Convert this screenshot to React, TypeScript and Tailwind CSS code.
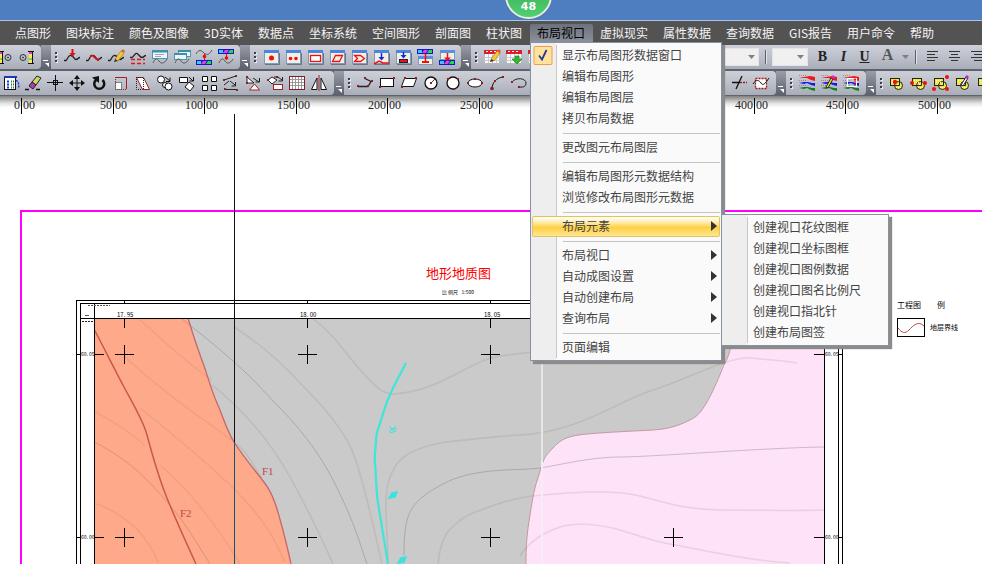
import type { ReactNode } from 'react';

const NAV_BEFORE = ['点图形', '图块标注', '颜色及图像', '3D实体', '数据点', '坐标系统', '空间图形', '剖面图', '柱状图'];
const NAV_AFTER = ['虚拟现实', '属性数据', '查询数据', 'GIS报告', '用户命令', '帮助'];

type Entry = { label: string; checked?: boolean; arrow?: boolean; active?: boolean } | 'sep';

const MENU: Entry[] = [
  { label: '显示布局图形数据窗口', checked: true },
  { label: '编辑布局图形' },
  { label: '编辑布局图层' },
  { label: '拷贝布局数据' },
  'sep',
  { label: '更改图元布局图层' },
  'sep',
  { label: '编辑布局图形元数据结构' },
  { label: '浏览修改布局图形元数据' },
  'sep',
  { label: '布局元素', arrow: true, active: true },
  'sep',
  { label: '布局视口', arrow: true },
  { label: '自动成图设置', arrow: true },
  { label: '自动创建布局', arrow: true },
  { label: '查询布局', arrow: true },
  'sep',
  { label: '页面编辑' },
];

const SUBMENU: Entry[] = [
  { label: '创建视口花纹图框' },
  { label: '创建视口坐标图框' },
  { label: '创建视口图例数据' },
  { label: '创建视口图名比例尺' },
  { label: '创建视口指北针' },
  { label: '创建布局图签' },
];

/* ---------- icon fragments, drawn on an 18 x 18 grid ---------- */

const Gauge = ({ x, c }: { x: number; c: number }) => (
  <>
    <rect x={x} y="4" width="3" height="2" fill="#e040d0" />
    <rect x={x} y="6" width="3" height="4" fill="#f4ec50" />
    <rect x={x} y="10" width="3" height="2" fill="#90c850" />
    <rect x={x} y="12" width="3" height="3" fill="#f4ec50" />
    <path d={`M${x - 1} 3.5h6M${x - 1} 15.500h6M${x + 3.5} 3v12`} stroke="#111" />
    <circle cx={c} cy="9.500" r="3" fill="none" stroke="#333" />
    <circle cx={c} cy="9.500" r="0.800" fill="#111" />
  </>
);

const Bars = ({ y }: { y: number }) => (
  <>
    <rect x="1" y={y} width="16" height="5" fill="#1418c8" />
    <rect x="2" y={y + 1} width="4" height="3" fill="#3cc8f0" />
    <path d={`M6 ${y + 4}l2-3h4l-2 3z`} fill="#e040e0" />
    <path d={`M11 ${y + 4}l2-3h3v3z`} fill="#20e040" />
  </>
);

const Win = ({ children }: { children?: ReactNode }) => (
  <>
    <rect x="2.500" y="2.500" width="14" height="13" fill="#f3f0e2" stroke="#7d9cc4" />
    <rect x="2" y="2" width="15" height="3" fill="#4a86e0" />
    <path d="M3 16.500h14.500V5" stroke="#6b7482" fill="none" />
    {children}
  </>
);

const Table = ({ children }: { children?: ReactNode }) => (
  <>
    <rect x="1.500" y="2.500" width="15" height="13" fill="#fafafa" stroke="#b8b8b8" />
    <path d="M1 9.500h16M1 12.500h16M5.500 6v9M9.500 6v9M13.500 6v9" stroke="#c6ccd0" />
    <rect x="1" y="2" width="16" height="4" fill="#d8202c" />
    <path d="M3 3.500h2M7 3.500h2M11 3.500h2" stroke="#fff" />
    {children}
  </>
);

const Stripes = ({ children }: { children?: ReactNode }) => (
  <>
    <path d="M1 4l5-1 6-1 5 1v4l-4-1-4-2-3 0z" fill="#f01818" />
    <path d="M1 9l5-1 4 0 4 1 3 0v3l-4-1-4-2-3 1z" fill="#1818f0" />
    <path d="M1 14l5-1 4 0 4 1 3 0v3l-4-1-4-2-3 1z" fill="#108020" />
    <path d="M1 1.500h8M1 6.500h7M1 11.500h7" stroke="#c03030" strokeOpacity="0.500" strokeDasharray="1 1" />
    {children}
  </>
);

const Overlap = ({ children }: { children?: ReactNode }) => (
  <>
    <rect x="2.500" y="4.500" width="9" height="7" fill="#f0e838" stroke="#222" />
    <circle cx="10.500" cy="11.500" r="4" fill="#f0e838" stroke="#222" />
    <path d="M6.500 11.500h5v-4" fill="none" stroke="#222" />
    <path d="M4 6.500h6M4 8.500h5M9 10.500h2M8 13.500h5" stroke="#fffbd0" strokeDasharray="1 1" />
    {children}
  </>
);

const Dot = ({ x, y, c = '#902020' }: { x: number; y: number; c?: string }) => (
  <rect x={x - 1} y={y - 1} width="2" height="2" fill={c} />
);

const wave = 'M1 12.500h2C5 11 5 7 8 7.500s3 4 5 4 2-2 4-2';
const waveLow = 'M2 15c2-5 4-5 6-2s5 3 8-2';
const pencil = (
  <>
    <path d="M8 11l6-8 3 2-6 8z" fill="#f4c83c" stroke="#b07818" strokeWidth="0.700" />
    <path d="M14 3l2-2 2 2-1 2z" fill="#e46430" />
    <path d="M8 11l3 2-4 1z" fill="#333" />
  </>
);
const pen = (
  <>
    <path d="M6 13l5-9 2 1-5 9z" fill="#f0e020" stroke="#222" />
    <path d="M11 3l2-2 2 2-2 2z" fill="#e020e0" />
  </>
);

const rowOneCurves: [string, ReactNode][] = [
  ['插入曲线点', <><path d={wave} stroke="#222" strokeWidth="1.300" fill="none" /><path d="M9.500 1v5" stroke="#e01010" strokeWidth="2" /><path d="M6.500 5h6L9.500 9z" fill="#e01010" /></>],
  ['移动曲线点', <><path d={wave} stroke="#222" strokeWidth="1.300" fill="none" /><path d="M6 7.500c3-1 3 4 7 4" stroke="#e01010" strokeWidth="1.500" fill="none" /><Dot x={6} y={8} c="#e01010" /><Dot x={13} y={12} c="#e01010" /></>],
  ['编辑曲线', <><path d={wave} stroke="#222" strokeWidth="1.300" fill="none" />{pencil}</>],
  ['曲线样式', <><path d="M1 9.500h2c2-1 3-5 5-4s3 4 5 4 2-2 4-2" stroke="#222" strokeWidth="1.300" fill="none" /><path d="M2 11.500h14M2 15.500h14" stroke="#e01818" strokeWidth="1.500" strokeDasharray="4 2" /></>],
  ['曲线窗口', <><rect x="1.500" y="2.500" width="15" height="8" fill="#eef6f8" stroke="#4c98b0" /><path d="M1 3.500h16" stroke="#3e8fac" strokeWidth="2" /><path d="M4 6.500h9M4 8.500h6" stroke="#9ab" /><path d={waveLow} stroke="#555" fill="none" /></>],
  ['曲线多窗口', <><rect x="5.500" y="2.500" width="12" height="6" fill="#eef6f8" stroke="#4c98b0" /><rect x="1.500" y="5.500" width="12" height="6" fill="#eef6f8" stroke="#4c98b0" /><path d="M5 3h13M1 6h13" stroke="#3e8fac" strokeWidth="2" /><path d={waveLow} stroke="#555" fill="none" /></>],
  ['曲线到图例', <><path d="M1 6c3-5 5-4 8-1s6 1 8-3" stroke="#555" fill="none" /><path d="M9.500 6v6" stroke="#e01010" /><circle cx="9.500" cy="8.500" r="1.800" fill="#e01010" /><Bars y={12} /></>],
  ['图例到曲线', <><Bars y={1} /><path d="M9.500 6v5" stroke="#e01010" /><path d={waveLow} stroke="#555" fill="none" /><circle cx="9.500" cy="10" r="1.800" fill="#e01010" /></>],
];

const rowOneData: [string, ReactNode][] = [
  ['单点', <Win><circle cx="9.500" cy="10" r="2.500" fill="#f01010" /></Win>],
  ['双点', <Win><circle cx="6.500" cy="10.500" r="1.800" fill="#f01010" /><circle cx="12" cy="10.500" r="1.800" fill="#f01010" /></Win>],
  ['矩形数据', <Win><rect x="4.500" y="7.500" width="10" height="6" fill="#fff" stroke="#f01010" strokeWidth="1.300" /></Win>],
  ['平行四边形数据', <Win><path d="M4.500 13.500l3-6h7l-3 6z" fill="none" stroke="#f01010" strokeWidth="1.300" /></Win>],
  ['多边形数据', <Win><path d="M4.500 7.500h6l4 3-4 3h-6l3-3z" fill="none" stroke="#f01010" strokeWidth="1.300" /></Win>],
  ['投影到曲线', <Win><path d="M2 16l5-3 4 2 6 0" stroke="#f01010" fill="none" strokeWidth="1.500" /><path d="M9.500 5v5" stroke="#1428e0" strokeWidth="1.500" /><path d="M6.500 9h6l-3 3.500z" fill="#1428e0" /></Win>],
  ['投影到矩形', <Win><rect x="5.500" y="11.500" width="8" height="3" fill="#f01010" stroke="#222" /><path d="M9.500 4v4" stroke="#1428e0" strokeWidth="1.500" /><path d="M6.500 7h6l-3 3.500z" fill="#1428e0" /></Win>],
  ['上层图例', <><rect x="2.500" y="8.500" width="14" height="8" fill="#f3f0e2" stroke="#7d9cc4" /><rect x="2" y="8" width="15" height="3" fill="#5a90e0" /><Bars y={1} /><path d="M9.500 6v7" stroke="#f01010" strokeWidth="1.500" /><path d="M6 14h7" stroke="#f01010" strokeWidth="2" /></>],
  ['下层图例', <><rect x="2.500" y="2.500" width="14" height="9" fill="#f3f0e2" stroke="#7d9cc4" /><rect x="2" y="2" width="15" height="3" fill="#5a90e0" /><Bars y={12} /><path d="M9.500 5v6" stroke="#f01010" strokeWidth="1.500" /><path d="M6 9.500h7l-3.500 3.500z" fill="#f01010" /></>],
];

const rowOneTables: [string, ReactNode][] = [
  ['编辑表', <Table>{pencil}</Table>],
  ['导入表', <Table><path d="M10 8h4v3h3l-5 5-5-5h3z" fill="#30b830" stroke="#187818" strokeWidth="0.600" /></Table>],
  ['表格', <Table />],
];

const rowTwoEdit: [string, ReactNode][] = [
  ['属性列表', <><rect x="2.500" y="2.500" width="11" height="13" fill="#fff" stroke="#111" /><path d="M2 3h13" stroke="#1838c0" strokeWidth="2" /><path d="M5 7.500h2M5 10.500h2M5 13.500h2" stroke="#1838e0" strokeWidth="2" /><path d="M9 7.500h3M9 10.500h3M9 13.500h3" stroke="#208040" strokeWidth="2" strokeDasharray="1 1" /><path d="M14 6.500c3 1 3 5 2.500 8" stroke="#1838e0" strokeWidth="1.500" fill="none" strokeDasharray="2 1" /></>],
  ['删除', <><path d="M8 8l5-6 4 2-5 7z" fill="#d8d460" stroke="#222" /><path d="M5 12l3-4 4 3-3 4z" fill="#b038c0" stroke="#222" /><path d="M1 15.500h4M12 15.500h4" stroke="#111" strokeWidth="1.500" /></>],
  ['拾取', <><path d="M9.500 1v16M1 8.500h16" stroke="#111" /><rect x="7.500" y="6.500" width="4" height="4" fill="none" stroke="#111" /></>],
  ['移动', <><path d="M9 3v12M3 9h12" stroke="#111" /><path d="M9 1L6 5h6zM9 17L6 13h6zM1 9l4-3v6zM17 9l-4-3v6z" fill="#111" /></>],
  ['旋转', <><path d="M6 6a5 5 0 1 0 6.500 0" stroke="#111" strokeWidth="2.500" fill="none" /><path d="M2 3.500l7-1.500v7z" fill="#111" /></>],
  ['缩放', <><path d="M3 3.500h11.500V15" fill="none" stroke="#9c2020" /><path d="M3.500 3v12.500H15" fill="none" stroke="#9c2020" strokeDasharray="1 1" /><rect x="3.500" y="8.500" width="6" height="7" fill="#fff" stroke="#222" strokeDasharray="1 1" /></>],
  ['倾斜', <><path d="M2.500 3.500h7l6 12h-7z" fill="#fff" stroke="#a02028" /><path d="M2.500 3v12.500h6M9.500 4v11M2 3.500h7" fill="none" stroke="#222" strokeDasharray="1 1" /></>],
  ['复制圆', <><circle cx="5" cy="5.500" r="3.500" fill="#fff" stroke="#111" /><circle cx="9" cy="11" r="2.500" fill="#fff" stroke="#111" /><circle cx="12.500" cy="12.500" r="3.500" fill="#fff" stroke="#111" /><path d="M9 3l5 4M14 3.500v4h-4" stroke="#111" fill="none" /></>],
  ['旋转复制', <><path d="M1.500 3.500h8v5h-8z" fill="#fff" stroke="#111" /><path d="M11 8l5 4-4 5-5-4z" fill="#fff" stroke="#111" /><path d="M11 3l4 4M15.500 3v4h-4" stroke="#111" fill="none" /></>],
  ['阵列', <path d="M2.500 2.500h5v5h-5zM11.500 2.500h5v5h-5zM2.500 11.500h5v5h-5zM11.500 11.500h5v5h-5z" fill="#fff" stroke="#111" />],
  ['对齐', <><path d="M2 6L14 2M2 11l5-4M3 15.500h13" stroke="#222" fill="none" /><path d="M8 7l5 4M13.500 8v4h-4" stroke="#222" fill="none" /><Dot x={2} y={6} /><Dot x={14} y={2} /><Dot x={3} y={15} /><Dot x={15} y={16} /></>],
  ['镜像对齐', <><path d="M3 3l7 6H3z" fill="#fff" stroke="#222" /><path d="M10.500 10l5 6h-10z" fill="#fff" stroke="#a02028" /><path d="M9 4l6 4M15.500 4v4h-4" stroke="#222" fill="none" /><Dot x={3} y={3} /><Dot x={3} y={9} /></>],
  ['变换', <><path d="M2 6l4-3 5 3-5 4z" fill="#fff" stroke="#222" /><rect x="7.500" y="10.500" width="9" height="5" fill="#fff" stroke="#a02028" /><path d="M8 3h4l4 3M16.500 3v4h-4" stroke="#222" fill="none" /><Dot x={2} y={6} /><Dot x={11} y={3} /></>],
  ['网格', <><rect x="1.500" y="2.500" width="15" height="13" fill="#fff" stroke="#802020" /><path d="M4.500 3v12M7.500 3v12M10.500 3v12M13.500 3v12M2 5.500h14M2 8.500h14M2 11.500h14" stroke="#999" /></>],
  ['镜像', <><path d="M7 4v11.500H1.500z" fill="#fff" stroke="#111" /><path d="M11 4v11.500h5.500z" fill="#fff" stroke="#111" /><path d="M9 1v16" stroke="#a02028" /></>],
];

const hook = <><path d="M2 12.500h10l3-5-6-3" stroke="#222" strokeWidth="1.300" fill="none" /><Dot x={2} y={12} /><Dot x={12} y={12} /><Dot x={9} y={4} /><Dot x={16} y={7} /></>;
const ring = <circle cx="9" cy="9" r="6" fill="#fff" stroke="#111" strokeWidth="1.300" />;

const rowTwoDraw: [string, ReactNode][] = [
  ['折线', hook],
  ['矩形', <><rect x="2.500" y="4.500" width="13" height="8" fill="#fff" stroke="#111" /><Dot x={2} y={13} /><Dot x={16} y={4} /></>],
  ['平行四边形', <><path d="M4.500 4.500h12l-3 8h-12z" fill="#fff" stroke="#111" /><Dot x={2} y={13} /><Dot x={16} y={4} /><Dot x={5} y={4} /></>],
  ['圆', <>{ring}<path d="M8 10l5-5" stroke="#802020" /><Dot x={9} y={9} /></>],
  ['三点圆', <>{ring}<Dot x={4} y={5} /><Dot x={14} y={5} /><Dot x={10} y={15} /></>],
  ['椭圆', <><ellipse cx="9" cy="9" rx="7" ry="4" fill="#fff" stroke="#111" /><Dot x={2} y={9} /><Dot x={16} y={9} /><Dot x={9} y={5} /></>],
  ['圆弧', <><path d="M4 15c0-6 4-11 11-12" stroke="#111" fill="none" /><circle cx="4" cy="14.500" r="1.800" fill="#802020" /><Dot x={15} y={3} /><Dot x={7} y={7} /></>],
  ['弧段', <><path d="M2 8c4-5 14-4 14 1s-5 4-7 4" stroke="#222" fill="none" /><Dot x={2} y={8} /><Dot x={9} y={13} /></>],
  ['曲线', <path d={wave} stroke="#222" fill="none" />],
  ['圆弧二', hook],
  ['圆二', ring],
  ['椭圆二', <ellipse cx="9" cy="9" rx="7" ry="4" fill="#fff" stroke="#111" />],
  ['折线二', hook],
  ['曲线二', <path d={wave} stroke="#222" fill="none" />],
  ['圆三', ring],
  ['折线三', hook],
  ['修剪', <path d="M9 15l5-11" stroke="#111" />],
  ['延伸', <><path d="M2 8.500h8M6 15l6-13" stroke="#111" strokeWidth="1.300" /><path d="M10 8.500h7" stroke="#a01818" strokeWidth="1.500" strokeDasharray="2 1" /></>],
  ['范围', <><rect x="3.500" y="4.500" width="11" height="10" fill="#fff" stroke="#a01818" strokeWidth="1.300" strokeDasharray="2 1" /><path d="M1 10c3-5 6-4 8-1s4 1 8-5" stroke="#111" fill="none" /></>],
];

const rowTwoLayers: [string, ReactNode][] = [
  ['图层', <Stripes />],
  ['编辑图层', <Stripes>{pen}</Stripes>],
  ['图层范围', <Stripes><rect x="5.500" y="4.500" width="9" height="8" fill="none" stroke="#fff" /><path d="M13 3v9" stroke="#f01818" /></Stripes>],
];

const rowTwoShapes: [string, ReactNode][] = [
  ['合并', <Overlap><circle cx="7" cy="8" r="2.200" fill="#f01010" /></Overlap>],
  ['相交', <Overlap><circle cx="2" cy="9" r="2" fill="#f01010" /><circle cx="15" cy="9" r="2" fill="#f01010" /></Overlap>],
  ['相减', <Overlap><circle cx="2" cy="15" r="2" fill="#f01010" /><circle cx="15" cy="3" r="2" fill="#f01010" /><circle cx="15" cy="15" r="2" fill="#f01010" /></Overlap>],
  ['编辑形状', <Overlap><path d="M7 11l5-8 2 1-5 8z" fill="#fff" stroke="#222" /><path d="M11 3l2-2 2 2-2 2z" fill="#c020d0" /></Overlap>],
  ['更多形状', <Overlap />],
];

/* ---------- toolbar parts ---------- */

function Tool({ label, children }: { label: string; children: ReactNode }) {
  return (
    <button type="button" aria-label={label} className="flex h-6 w-[22px] shrink-0 items-center justify-center">
      <svg width="18" height="18" viewBox="0 0 18 18" aria-hidden="true">{children}</svg>
    </button>
  );
}

const tools = (list: [string, ReactNode][]) => list.map(([label, art]) => <Tool key={label} label={label}>{art}</Tool>);

function Group({ children, grip = true, grow = false, wide = false }: { children: ReactNode; grip?: boolean; grow?: boolean; wide?: boolean }) {
  return (
    <div
      role="toolbar"
      className={`flex h-6 items-center rounded-r-sm bg-linear-to-b from-[#cdd0d8] via-[#bcc0ca] to-[#a9adb8] ${grow ? 'grow' : 'shrink-0'} ${wide ? 'pr-1' : 'pr-[3px]'}`}
    >
      {grip && (
        <span className="flex w-[10px] shrink-0 flex-col items-center gap-0.5" aria-hidden="true">
          <i className="size-0.5 bg-[#3a3e48] shadow-[1px_1px_0_#f0f0f4]" />
          <i className="size-0.5 bg-[#3a3e48] shadow-[1px_1px_0_#f0f0f4]" />
          <i className="size-0.5 bg-[#3a3e48] shadow-[1px_1px_0_#f0f0f4]" />
        </span>
      )}
      {children}
    </div>
  );
}

function More() {
  return (
    <button type="button" aria-label="更多按钮" className="flex h-6 w-[10px] shrink-0 items-end justify-center bg-linear-to-b from-[#9a9ea9] to-[#5c606b] pb-0.5">
      <svg width="6" height="8" viewBox="0 0 6 8" aria-hidden="true">
        <path d="M0 1.500h5" stroke="#fff" />
        <path d="M2 4h4v4z" fill="#fff" />
      </svg>
    </button>
  );
}

function Picker({ label, className }: { label: string; className: string }) {
  return (
    <span className={`relative flex h-[18px] shrink-0 ${className}`}>
      <select aria-label={label} className="w-full appearance-none border border-[#e2e4e8] bg-[#f0f0f0] text-xs" />
      <svg className="pointer-events-none absolute top-[7px] right-1" width="7" height="4" viewBox="0 0 7 4" aria-hidden="true">
        <path d="M0 0h7L3.500 4z" fill="#808080" />
      </svg>
    </span>
  );
}

const Divider = () => <span className="mx-1.5 h-3.5 w-px shrink-0 bg-[#5c606a] shadow-[1px_0_0_#e0e2e8]" />;

const letter = 'flex h-6 w-[21px] shrink-0 items-center justify-center font-bold';

function AlignTool({ label, d }: { label: string; d: string }) {
  return (
    <Tool label={label}>
      <path d={d} stroke="#333" />
    </Tool>
  );
}

/* ---------- menus ---------- */

function MenuPanel({ entries, children }: { entries: Entry[]; children?: ReactNode }) {
  return (
    <ul
      role="menu"
      className="relative flex w-full flex-col border border-[#8692a0] bg-[#fafafa] bg-linear-to-r from-[#eeeeee] from-[25px] to-[#fafafa] to-[25px] py-0.5 shadow-[3px_3px_1px_#8b8b8b]"
    >
      <li role="none" className="pointer-events-none absolute inset-y-0.5 left-[25px] w-px bg-[#c8c8c8]" />
      {entries.map((entry, i) =>
        entry === 'sep' ? (
          <li key={i} role="separator" className="flex h-2 items-center pr-px pl-8">
            <span className="h-px w-full bg-[#c4c4c4]" />
          </li>
        ) : (
          <li key={i} role="none" className="relative px-px">
            <button
              type="button"
              role="menuitem"
              className={`flex h-[21px] w-full items-center rounded-xs border text-[#444] ${
                entry.active
                  ? 'border-[#dcc36c] bg-linear-to-b from-[#fffbe4] from-10% via-[#ffd03c] via-55% to-[#ffe68e]'
                  : 'border-transparent'
              }`}
            >
              <span className="flex w-[29px] shrink-0 items-center">
                {entry.checked && (
                  <svg width="20" height="19" viewBox="0 0 20 19" aria-hidden="true">
                    <rect x="1" y="0.500" width="18" height="18" rx="1" fill="#ffe29c" stroke="#f29a4a" />
                    <path d="M6 9.500l3 4L13.500 4" fill="none" stroke="#2a3a90" strokeWidth="1.800" />
                  </svg>
                )}
              </span>
              <span className="grow pb-0.5 text-left whitespace-nowrap">{entry.label}</span>
              {entry.arrow && (
                <svg className="mr-0.5 mb-0.5" width="6" height="10" viewBox="0 0 6 10" aria-hidden="true">
                  <path d="M0 0l6 5-6 5z" fill="#333" />
                </svg>
              )}
            </button>
            {entry.active && children}
          </li>
        ),
      )}
    </ul>
  );
}

/* ---------- drawing ---------- */

const RULER = [0, 50, 100, 150, 200, 250, 350, 400, 450, 500];

function Ruler() {
  return (
    <div className="h-[18px] overflow-hidden bg-linear-to-b from-[#808080] via-[#e2e2e2] via-40% to-white to-65%">
      <svg width="1040" height="18" className="font-['Liberation_Serif',serif] text-xs" role="img" aria-label="标尺">
        {RULER.map((n) => {
          const x = Math.floor(21.5 + (n / 50) * 91.6);
          return (
            <g key={n} fill="#222">
              <rect x={x} y="2" width="1" height="16" fill="#000" />
              <text x={x - 1} y="13" textAnchor="end">{n}</text>
              <text x={x + 2} y="13">00</text>
            </g>
          );
        })}
      </svg>
    </div>
  );
}

const XS = [124, 307, 490, 673];
const YS = [354, 537];

const CONTOURS = [
  'M313 319C335 334 350 360 363 373S380 393 393 394C440 392 470 360 500 356S560 350 580 344',
  'M234 327C270 350 290 372 300 383C322 405 335 420 347 440S372 520 382 564',
  'M212 385C250 415 275 450 290 477S325 545 333 564',
  'M388 560C387 530 384 500 388 484S400 458 410 453S430 444 447 442S500 436 520 435C580 432 620 400 653 390S730 355 753 358S780 360 797 363',
  'M438 564C440 545 445 536 447 533S460 518 473 513S510 498 533 496S610 488 640 496S690 510 720 510S790 511 824 510',
  'M520 556C530 540 545 532 560 527S600 524 620 530S655 542 670 544S740 560 790 563',
];

const FAINT_CONTOURS = [
  'M140 320C165 342 185 362 212 380',
  'M125 357C150 380 175 400 215 428S245 455 262 478',
  'M140 408C165 428 205 460 235 490S275 540 285 562',
  'M94 411C120 425 140 440 145 446',
  'M160 465C190 490 220 530 240 564',
  'M94 503C120 512 145 530 158 562',
];

const DARK_CONTOURS = [
  'M182 319C200 333 240 365 260 387S310 435 333 480S360 545 367 564',
  'M404 555C404 540 405 525 408 517S416 497 447 482S520 471 540 468S590 457 620 457S760 448 824 447',
];

const BOUNDARY = 'M188 318C195 342 199 352 203 363S212 392 217 403S227 431 234 442S252 467 260 477S271 492 275 503S287 545 291 564';

function MapDrawing() {
  return (
    <svg
      width="982"
      height="450"
      viewBox="0 114 982 450"
      role="img"
      aria-label="地形地质图"
      className="block font-['Noto_Sans_CJK_SC',sans-serif]"
    >
      <defs>
        <clipPath id="mapArea"><rect x="94" y="318" width="731" height="246" /></clipPath>
      </defs>
      <g clipPath="url(#mapArea)">
        <rect x="94" y="318" width="731" height="246" fill="#cacaca" />
        <path d={`${BOUNDARY}H94V318Z`} fill="#ffa98b" />
        <path d="M740 318C736 330 733 340 731 346C728 360 724 364 723 367S714 390 707 402S696 417 690 420S672 429 653 430S610 432 587 434S560 441 553 448S544 458 542 465S535 485 533 497S528 525 527 537S526 555 526 570H830V318Z" fill="#fde2f8" stroke="#c09aa4" />
        <g fill="none" stroke="#786450" strokeOpacity="0.140" strokeWidth="1.500">
          {CONTOURS.map((d) => <path key={d} d={d} />)}
        </g>
        <g fill="none" stroke="#907050" strokeOpacity="0.140" strokeWidth="1.500">
          {FAINT_CONTOURS.map((d) => <path key={d} d={d} />)}
        </g>
        <path d="M94 442C130 460 150 482 168 503S195 540 210 564" fill="none" stroke="#a06848" strokeOpacity="0.350" />
        <g fill="none" stroke="#605860" strokeOpacity="0.300">
          {DARK_CONTOURS.map((d) => <path key={d} d={d} />)}
        </g>
        <path d={BOUNDARY} fill="none" stroke="#c4686a" strokeWidth="1.300" />
        <path d="M94 329C105 350 115 370 124 387S143 420 147 435S160 480 165 493S185 540 196 564" fill="none" stroke="#c9584a" strokeWidth="1.500" />
        <rect x="541" y="361" width="2" height="100" fill="#e6e6e6" />
        <rect x="541" y="461" width="2" height="103" fill="#f6ecf8" />
        <path d="M406 363C402 371 397 380 393 388S385 406 382 417S376 432 376 440S374 455 375 463S376 490 378 503S385 545 388 564" fill="none" stroke="#3ee6d8" strokeWidth="2.200" />
        <g stroke="#3ee0e0" strokeWidth="1.500" fill="#3ee0e0">
          <path d="M389 426l6 6M389 432l7-6M390 429h7M390 433l6-2" strokeWidth="1" />
          <path d="M389 498l3-5 5-1-2 5z" />
          <path d="M398 563l3-5 5-1-2 5z" />
        </g>
        <g className="font-['Liberation_Serif',serif] text-[11px]" fill="#c04848">
          <text x="262" y="475">F1</text>
          <text x="180" y="517">F2</text>
        </g>
      </g>

      <g fill="#000">
        <rect x="76" y="300" width="767" height="1" />
        <rect x="80" y="303" width="759" height="1" />
        <rect x="80" y="318" width="759" height="1" />
        <rect x="76" y="300" width="1" height="264" />
        <rect x="80" y="303" width="1" height="261" />
        <rect x="94" y="303" width="1" height="261" />
        <rect x="824" y="303" width="1" height="261" />
        <rect x="838" y="303" width="1" height="261" />
        <rect x="842" y="300" width="1" height="264" />
        {XS.map((x) => (
          <g key={x}>
            <rect x={x} y="300" width="1" height="3" />
            <rect x={x} y="318" width="1" height="10" />
            {YS.map((y) => (
              <g key={y}>
                <rect x={x} y={y - 9} width="1" height="19" />
                <rect x={x - 9} y={y} width="19" height="1" />
              </g>
            ))}
          </g>
        ))}
        {YS.map((y) => (
          <g key={y}>
            <rect x="76" y={y} width="5" height="1" />
            <rect x="94" y={y} width="10" height="1" />
            <rect x="814" y={y} width="11" height="1" />
            <rect x="838" y={y} width="5" height="1" />
          </g>
        ))}
        <g className="text-[6px]">
          <text x="117" y="317">17. 95</text>
          <text x="300" y="317">18. 00</text>
          <text x="484" y="317">18. 05</text>
          <text x="81" y="356" className="text-[5px]">60. 05</text>
          <text x="81" y="539" className="text-[5px]">60. 00</text>
          <text x="825" y="356" className="text-[5px]">60. 05</text>
          <text x="825" y="539" className="text-[5px]">60. 00</text>
        </g>
        <text x="442" y="294" className="text-[5px]" xmlSpace="preserve">比 例尺   1:500</text>
        <text x="897" y="308" className="text-[8px]">工程图</text>
        <text x="937" y="308" className="text-[8px]">例</text>
        <text x="930" y="330" className="text-[7px]">地层界线</text>
      </g>
      <g fill="none">
        <path d="M88 305.500h22" stroke="#555" strokeDasharray="2 1" />
        <path d="M85 315.500h4" stroke="#555" />
        <path d="M82 321.500h12" stroke="#222" strokeDasharray="2 1" />
      </g>
      <text x="426" y="278" fill="#f00" className="text-[13px]">地形地质图</text>

      <rect x="897.500" y="318.500" width="27" height="18" fill="#fff" stroke="#000" />
      <path d="M898 328C902 333 905 334 909 330S918 320 924 326" fill="none" stroke="#b85040" />

      <rect x="20" y="210" width="962" height="2" fill="#f0f" />
      <rect x="20" y="210" width="2" height="354" fill="#f0f" />
      <rect x="234" y="114" width="1" height="328" fill="#111" />
      <rect x="234" y="442" width="1" height="122" fill="#0c5870" />
    </svg>
  );
}

export default function App() {
  return (
    <div className="flex h-screen flex-col overflow-hidden bg-white font-['Noto_Sans_CJK_SC',sans-serif] text-xs">
      <header className="relative h-[21px] shrink-0 border-b border-[#a9c4ea] bg-[#4f7ec0]">
        <div className="absolute top-[-28px] left-[505px] flex size-[47px] items-end justify-center rounded-full border-2 border-[#e4ece4] bg-linear-to-b from-[#2fa050] to-[#52d070] pb-0.5 font-['DejaVu_Sans',sans-serif] text-[11px] font-bold text-white shadow-[0_0_1px_#555]">
          48
        </div>
      </header>

      <nav aria-label="主菜单" className="relative z-10 flex h-6 shrink-0 items-end bg-[#535353] pb-[3px] pl-2 text-[#f4f4f4]">
        {NAV_BEFORE.map((label) => (
          <button key={label} type="button" className="h-[18px] shrink-0 pr-2 pl-[7px] whitespace-nowrap">{label}</button>
        ))}
        <div className="relative shrink-0">
          <button type="button" aria-haspopup="menu" aria-expanded="true" className="block h-[18px] rounded-t-xs bg-linear-to-b from-[#6c717c] to-[#8b909c] pr-2 pl-[7px] whitespace-nowrap text-black">
            布局视口
          </button>
          <div className="absolute top-full left-0 w-[192px]">
            <MenuPanel entries={MENU}>
              <div className="absolute -top-0.5 left-full z-10 w-[168px]">
                <MenuPanel entries={SUBMENU} />
              </div>
            </MenuPanel>
          </div>
        </div>
        {NAV_AFTER.map((label) => (
          <button key={label} type="button" className="h-[18px] shrink-0 pr-2 pl-[7px] whitespace-nowrap">{label}</button>
        ))}
      </nav>

      <div className="flex shrink-0 flex-col gap-0.5 bg-[#5f636d] pb-px">
        <div className="flex overflow-hidden">
          <Group grip={false}>
            <button type="button" aria-label="左标尺" className="flex h-6 w-4 shrink-0 items-center">
              <svg width="16" height="18" viewBox="0 0 16 18" aria-hidden="true"><Gauge x={-1} c={8} /></svg>
            </button>
            <Tool label="右标尺"><Gauge x={11} c={5} /></Tool>
          </Group>
          <More />
          <Group>{tools(rowOneCurves)}</Group>
          <More />
          <Group>{tools(rowOneData)}</Group>
          <More />
          <Group>{tools(rowOneTables)}</Group>
          <More />
          <Group grow>
            <Picker label="字体" className="w-[189px]" />
            <Divider />
            <Picker label="字号" className="w-9" />
            <div className="flex items-center pl-1 font-['Liberation_Serif',serif] text-sm text-[#222]">
              <button type="button" className={letter}>B</button>
              <button type="button" className={`${letter} italic`}>I</button>
              <button type="button" className={`${letter} underline`}>U</button>
              <button type="button" className={`${letter} pb-1 pl-1 text-base text-[#555]`}>A</button>
            </div>
            <svg className="ml-1.5 shrink-0" width="7" height="4" viewBox="0 0 7 4" aria-hidden="true">
              <path d="M0 0h7L3.500 4z" fill="#808080" />
            </svg>
            <Divider />
            <AlignTool label="左对齐" d="M3 3.500h11M3 6.500h8M3 9.500h11M3 12.500h8" />
            <AlignTool label="居中" d="M3 3.500h11M5 6.500h7M3 9.500h11M5 12.500h7" />
            <AlignTool label="右对齐" d="M3 3.500h11M6 6.500h8M3 9.500h11M6 12.500h8" />
          </Group>
        </div>
        <div className="flex overflow-hidden">
          <Group grip={false} wide>{tools(rowTwoEdit)}</Group>
          <More />
          <Group wide>{tools(rowTwoDraw)}</Group>
          <More />
          <Group wide>{tools(rowTwoLayers)}</Group>
          <More />
          <Group grow wide>{tools(rowTwoShapes)}</Group>
        </div>
      </div>

      <div className="shrink-0">
        <Ruler />
      </div>

      <main className="min-h-0 grow overflow-hidden">
        <MapDrawing />
      </main>
    </div>
  );
}
